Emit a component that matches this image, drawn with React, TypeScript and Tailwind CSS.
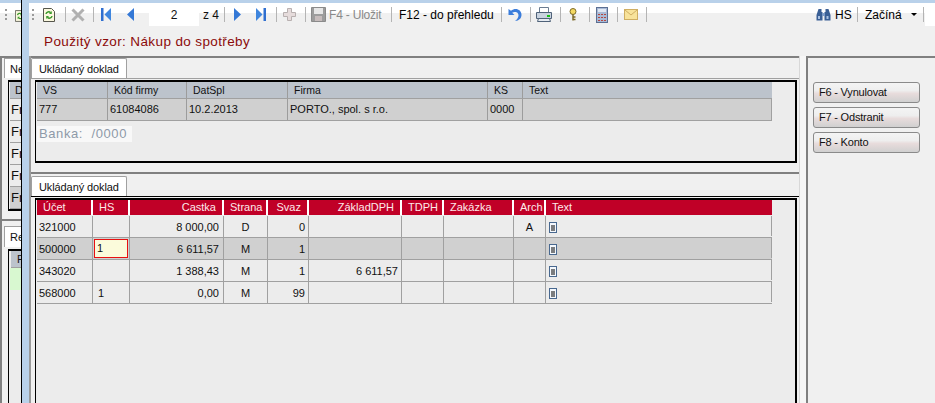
import type { ReactNode } from 'react'

const colsTop = 'grid-cols-[71px_79px_101px_200px_35px_249px]'
const colsBottom = 'grid-cols-[56px_37px_94px_44px_41px_93px_42px_70px_32px_226px]'

const bottomRows = [
  ['321000', '', '8 000,00', 'D', '0', '', '', '', 'A'],
  ['500000', '1', '6 611,57', 'M', '1', '', '', '', ''],
  ['343020', '', '1 388,43', 'M', '1', '6 611,57', '', '', ''],
  ['568000', '1', '0,00', 'M', '99', '', '', '', ''],
]

const cellAlign = [
  'text-left pl-[2px]',
  'text-left pl-[5px]',
  'text-right pr-[4px]',
  'text-center',
  'text-right pr-[3px]',
  'text-right pr-[3px]',
  'text-left',
  'text-left',
  'text-center',
]

function Sep({ className = '' }: { className?: string }) {
  return <div className={`w-px h-[15px] bg-[#b4b4b4] shrink-0 ${className}`} />
}

function DocIcon() {
  return (
    <svg width="8" height="11" viewBox="0 0 8 11" className="ml-[3px] mt-[6px]">
      <rect x="0.5" y="0.5" width="7" height="10" fill="#f4f8fd" stroke="#48688f" />
      <path d="M2 4h4M2 6h4M2 8h4" stroke="#000" strokeWidth="1" />
    </svg>
  )
}

function RefreshIcon({ className = '' }: { className?: string }) {
  return (
    <svg width="12" height="14" viewBox="0 0 12 14" className={`shrink-0 ${className}`}>
      <path d="M0.5 0.5h8l3 3v10h-11z" fill="#fbf8df" stroke="#56564c" />
      <path d="M3 6a2.6 2.6 0 0 1 4.6-1.2M9 8a2.6 2.6 0 0 1-4.6 1.2" fill="none" stroke="#3c9a2e" strokeWidth="1.5" />
      <path d="M8.8 3v3H6zM3.2 11V8H6z" fill="#3c9a2e" />
    </svg>
  )
}

function First({ className = '', flip }: { className?: string; flip?: boolean }) {
  return (
    <svg width="10" height="13" viewBox="0 0 10 13" className={`shrink-0 ${flip ? '-scale-x-100' : ''} ${className}`}>
      <rect x="0" y="0" width="2.5" height="13" fill="#2f6fd0" />
      <path d="M10 0v13L3.5 6.5z" fill="#3f86de" />
    </svg>
  )
}

function Prev({ className = '', flip }: { className?: string; flip?: boolean }) {
  return (
    <svg width="7" height="13" viewBox="0 0 7 13" className={`shrink-0 ${flip ? '-scale-x-100' : ''} ${className}`}>
      <path d="M7 0v13L0 6.5z" fill="#3478d6" />
    </svg>
  )
}

function ToolText({ children, muted, className = '' }: { children: ReactNode; muted?: boolean; className?: string }) {
  return <span className={`text-[12px] whitespace-nowrap shrink-0 ${muted ? 'text-[#8a8a8a]' : 'text-black'} ${className}`}>{children}</span>
}

function Toolbar() {
  return (
    <div className="h-[53px] shrink-0 bg-[linear-gradient(#ffffff_0,#ffffff_10px,#f0f0f0_10px)]">
      <div className="h-[23px] flex items-center">
        <span className="w-[2px] h-[11px] ml-[3px] border-l-2 border-dotted border-[#9a9a9a] shrink-0" />
        <RefreshIcon className="ml-[9px]" />
        <Sep className="ml-[10px]" />
        <svg width="14" height="14" viewBox="0 0 14 14" className="ml-[5px] shrink-0">
          <path d="M1.5 1.5l11 11M12.5 1.5l-11 11" stroke="#b0b0b0" strokeWidth="3" />
        </svg>
        <Sep className="ml-[8px]" />
        <First className="ml-[7px]" />
        <Prev className="ml-[16px]" />
        <div className="w-[50px] h-[23px] ml-[15px] bg-white text-center text-[12px] leading-[24px] shrink-0">2</div>
        <span className="w-[17px] text-[12px] ml-[4px] shrink-0 whitespace-nowrap">z 4</span>
        <Sep className="ml-[4px]" />
        <Prev flip className="ml-[9px]" />
        <First flip className="ml-[15px]" />
        <Sep className="ml-[10px]" />
        <svg width="13" height="13" viewBox="0 0 13 13" className="ml-[6px] shrink-0">
          <path d="M4.5 0.5h4v4h4v4h-4v4h-4v-4h-4v-4h4z" fill="#e6dcdc" stroke="#b8b0b0" />
        </svg>
        <Sep className="ml-[9px]" />
        <svg width="15" height="15" viewBox="0 0 15 15" className="ml-[5px] shrink-0">
          <path d="M0.5 0.5h14v14h-14z" fill="#9c9c9c" stroke="#8a8a8a" />
          <rect x="3" y="1" width="9" height="6" fill="#e6e6e6" />
          <rect x="4" y="9" width="7" height="5" fill="#c6bcbc" />
        </svg>
        <ToolText muted className="ml-[3px] w-[54px] tracking-[-0.2px]">F4 - Uložit</ToolText>
        <Sep className="ml-[8px]" />
        <ToolText className="ml-[7px] w-[94px]">F12 - do přehledu</ToolText>
        <Sep className="ml-[8px]" />
        <svg width="14" height="14" viewBox="0 0 14 14" className="ml-[6px] shrink-0">
          <path d="M0.5 1v6h6L4.2 4.8C7 3 10.5 4 10.5 7.2c0 2.2-1.2 4.2-3.5 5.8 4.2-.2 6.5-3 6.5-6.300C13.500 1.500 7.500-1 3 2.700z" fill="#3b7ddb" />
        </svg>
        <Sep className="ml-[8px]" />
        <svg width="16" height="15" viewBox="0 0 16 15" className="ml-[5px] shrink-0">
          <path d="M3.5 0.500h9v5h-9z" fill="#fff" stroke="#6b7c91" />
          <path d="M0.500 5.500h15v6h-15z" fill="#c9d3df" stroke="#4f6279" />
          <path d="M2.500 11.500h11l1 3h-13z" fill="#e6ebf1" stroke="#4f6279" />
          <rect x="11" y="8" width="3" height="2" fill="#18c018" />
        </svg>
        <Sep className="ml-[8px]" />
        <svg width="8" height="13" viewBox="0 0 8 13" className="ml-[8px] shrink-0">
          <circle cx="4" cy="3.500" r="3" fill="#f3d860" stroke="#7d6a28" />
          <path d="M4 6.500v6M4 9h2.500M4 11.500h2.500" stroke="#7d6a28" strokeWidth="1.500" />
        </svg>
        <Sep className="ml-[12px]" />
        <svg width="12" height="16" viewBox="0 0 12 16" className="ml-[6px] shrink-0">
          <rect x="0.500" y="0.500" width="11" height="15" fill="#a9bad6" stroke="#5b6f93" />
          <rect x="2" y="2" width="8" height="3" fill="#dfe7f3" />
          <path d="M2 7h2v1H2zM5 7h2v1H5zM8 7h2v1H8zM2 10h2v1H2zM5 10h2v1H5zM8 10h2v1H8zM2 13h2v1H2zM5 13h2v1H5zM8 13h2v1H8z" fill="#b5473f" />
        </svg>
        <Sep className="ml-[9px]" />
        <svg width="14" height="11" viewBox="0 0 14 11" className="ml-[6px] shrink-0">
          <rect x="0.500" y="0.500" width="13" height="10" fill="#f8e39a" stroke="#cfae62" />
          <path d="M1 1l6 5 6-5" fill="none" stroke="#cfae62" />
        </svg>
        <Sep className="ml-[8px]" />
        <svg width="15" height="12" viewBox="0 0 15 12" className="ml-auto shrink-0">
          <path d="M2.500 0h3v3h1v8.500H0.500V6zM12.500 0h-3v3h-1v8.500h6V6z" fill="#3a5f95" />
          <rect x="6" y="4" width="3" height="3" fill="#7f9cc6" />
          <rect x="2" y="7" width="2" height="3" fill="#a9c1e2" />
          <rect x="10.500" y="7" width="2" height="3" fill="#a9c1e2" />
        </svg>
        <ToolText className="ml-[4px] w-[16px]">HS</ToolText>
        <Sep className="ml-[6px]" />
        <ToolText className="ml-[7px] w-[35px]">Začíná</ToolText>
        <span className="ml-[11px] border-x-[3px] border-t-[3px] border-x-transparent border-t-black shrink-0" />
        <Sep className="ml-[6px]" />
        <div className="w-[10px] h-[23px] bg-white ml-px shrink-0" />
      </div>
      <p className="text-[13.5px] text-[#8b0a0a] ml-[15px] mt-[8px] leading-4 tracking-[0.38px] whitespace-nowrap">
        Použitý vzor: Nákup do spotřeby
      </p>
    </div>
  )
}

function Tab() {
  return (
    <div className="w-[96px] h-[20px] bg-white border border-b-0 border-[#a0a0a0] rounded-t-[2px] pl-[7px] text-[11px] leading-[20px] tracking-[-0.1px] whitespace-nowrap">
      Ukládaný doklad
    </div>
  )
}

function TopPanel() {
  const head = ['VS', 'Kód firmy', 'DatSpl', 'Firma', 'KS', 'Text']
  const row = ['777', '61084086', '10.2.2013', 'PORTO., spol. s r.o.', '0000', '']
  return (
    <div className="h-[116px] shrink-0 border-b-[2px] border-[#808080]">
      <Tab />
      <div className="border-t border-[#a0a0a0] pt-[1px] pl-[4px] pr-[2px]">
        <div className="h-[83px] border-l border-t-2 border-r-2 border-b-2 border-black pl-px bg-[#ececec]">
          <div className={`grid ${colsTop} w-[735px] bg-[#bcc3cc] h-[17px] border-b border-[#a0a0a0]`}>
            {head.map((h, i) => (
              <div key={i} className="border-r border-[#9c9c9c] pl-[6px] text-[10.5px] leading-[16px] last:border-r-0">{h}</div>
            ))}
          </div>
          <div className={`grid ${colsTop} w-[735px] bg-[#d0d0d0] h-[22px] border-b border-r border-[#a0a0a0]`}>
            {row.map((c, i) => (
              <div key={i} className="border-r border-[#9c9c9c] pl-[2px] text-[11px] leading-[21px] whitespace-nowrap last:border-r-0">{c}</div>
            ))}
          </div>
          <div className="mt-[5px] w-[95px] h-[16px] bg-[#f8f8f8] pl-[2px] text-[13px] leading-[15px] text-[#8e9aa8] tracking-[0.6px] whitespace-nowrap">
            Banka:&nbsp; /0000
          </div>
        </div>
      </div>
    </div>
  )
}

function BottomPanel() {
  const head = ['Účet', 'HS', 'Castka', 'Strana', 'Svaz', 'ZákladDPH', 'TDPH', 'Zakázka', 'Arch', 'Text']
  return (
    <div className="flex-1 min-h-0 flex flex-col pt-[2px]">
      <Tab />
      <div className="flex-1 min-h-0 border-t border-black pt-[1px] pl-[4px] pr-[2px]">
        <div className="h-[250px] border-l border-t-2 border-r-2 border-black pl-px bg-[#ececec]">
          <div className={`grid ${colsBottom} w-[735px] h-[16px] bg-[#c00027] border-b border-[#ececec]`}>
            {head.map((h, i) => (
              <div
                key={h}
                className={`border-r-2 border-white text-[#fdeaea] text-[11px] leading-[15px] px-[6px] whitespace-nowrap last:border-r-0 ${
                  i === 2 || i === 4 || i === 5 ? 'text-right' : i === 3 || i === 8 ? 'text-center px-0' : 'text-left'
                }`}
              >
                {h}
              </div>
            ))}
          </div>
          {bottomRows.map((row, r) => (
            <div
              key={row[0]}
              className={`grid ${colsBottom} w-[735px] h-[22px] border-b border-[#a0a0a0] ${r === 1 ? 'bg-[#d0d0d0]' : ''}`}
            >
              {row.map((c, i) =>
                r === 1 && i === 1 ? (
                  <div key={i} className="border-r border-[#a0a0a0]">
                    <div className="h-[19px] w-[34px] ml-px mt-[1px] border-[1.5px] border-[#e81010] bg-[#fbfbdb] pl-[2px] text-[11px] leading-[16px]">1</div>
                  </div>
                ) : (
                  <div key={i} className={`border-r border-[#a0a0a0] text-[11px] leading-[22px] whitespace-nowrap ${cellAlign[i]}`}>
                    {c}
                  </div>
                ),
              )}
              <div className="h-[20px] border-r border-[#a0a0a0]">
                <DocIcon />
              </div>
            </div>
          ))}
        </div>
      </div>
    </div>
  )
}

function BackWindow() {
  return (
    <div className="w-[21px] shrink-0 overflow-hidden flex flex-col bg-[#f0f0f0]">
      <div className="h-[3px] shrink-0 bg-[#b9d1ea]" />
      <div className="h-[53px] shrink-0 bg-[linear-gradient(#ffffff_0,#ffffff_10px,#f0f0f0_10px)] flex items-start pt-[6px] pl-[5px] gap-[8px]">
        <span className="w-[2px] h-[11px] border-l-2 border-dotted border-[#9a9a9a] shrink-0" />
        <RefreshIcon className="w-[10px]" />
      </div>
      <div className="flex-1 min-h-0 border-t-2 border-l-2 border-[#808080] flex flex-col">
        <div className="pl-[2px] h-[22px] shrink-0">
          <div className="w-[30px] h-[20px] bg-white border border-b-0 border-[#a0a0a0] pl-[5px] text-[11px] leading-[20px]">Ne</div>
        </div>
        <div className="ml-[6px] w-[30px] h-[131px] shrink-0 border-l border-t-2 border-b-2 border-black pl-px">
          <div className="h-[17px] bg-[#bcc3cc] border-b border-[#a0a0a0] pl-[5px] text-[11px] leading-[17px]">D</div>
          {[0, 1, 2, 3, 4].map((i) => (
            <div key={i} className={`h-[22px] border-b border-[#a0a0a0] pl-px text-[13px] leading-[21px] ${i === 4 ? 'bg-[#d0d0d0]' : 'bg-[#ececec]'}`}>Fr</div>
          ))}
        </div>
        <div className="h-[6px] shrink-0 border-b-[2px] border-[#808080] mt-[4px]" />
        <div className="h-[5px] shrink-0" />
        <div className="pl-[2px] shrink-0">
          <div className="w-[30px] h-[21px] bg-white border border-b-0 border-[#a0a0a0] pl-[5px] text-[11px] leading-[20px]">Re</div>
        </div>
        <div className="ml-[6px] flex-1 border-l border-t-2 border-black mt-[2px] pl-px bg-[#ececec]">
          <div className="h-[17px] ml-px bg-[#bcc3cc] border-b border-[#a0a0a0] pl-[6px] text-[11px] leading-[17px]">R</div>
          <div className="h-[22px] bg-[#d8f8d0]" />
        </div>
      </div>
    </div>
  )
}

export default function App() {
  return (
    <div className="w-[935px] h-[403px] overflow-hidden flex bg-[#f0f0f0] font-['Liberation_Sans',sans-serif] text-[#111]">
      <BackWindow />
      <div className="flex-1 flex flex-col min-w-0 border-l border-black bg-[#b9d1ea]">
        <div className="h-[3px] shrink-0" />
        <div className="flex-1 min-h-0 ml-[7px] flex flex-col bg-[#f0f0f0]">
          <Toolbar />
          <div className="flex-1 min-h-0 flex border-l-2 border-[#9a9a9a]">
            <div className="w-[768px] shrink-0 flex flex-col border-t-2 border-[#808080]">
              <TopPanel />
              <BottomPanel />
            </div>
            <div className="w-[7px] shrink-0 bg-[#f6f6f6] border-l border-[#d8d8d8]" />
            <div className="flex-1 border-l-[2px] border-t-[2px] border-[#808080] pt-[24px] pl-[5px] flex flex-col gap-[4px]">
              {['F6 - Vynulovat', 'F7 - Odstranit', 'F8 - Konto'].map((b) => (
                <div
                  key={b}
                  className="w-[107px] h-[21px] rounded-[3px] border border-[#8a8a8a] bg-[linear-gradient(#f4f4f4,#eeeeee_40%,#e8dcdc_55%,#d0d0d0)] pl-[5px] text-[11px] leading-[19px] tracking-[-0.2px]"
                >
                  {b}
                </div>
              ))}
            </div>
          </div>
        </div>
      </div>
    </div>
  )
}
